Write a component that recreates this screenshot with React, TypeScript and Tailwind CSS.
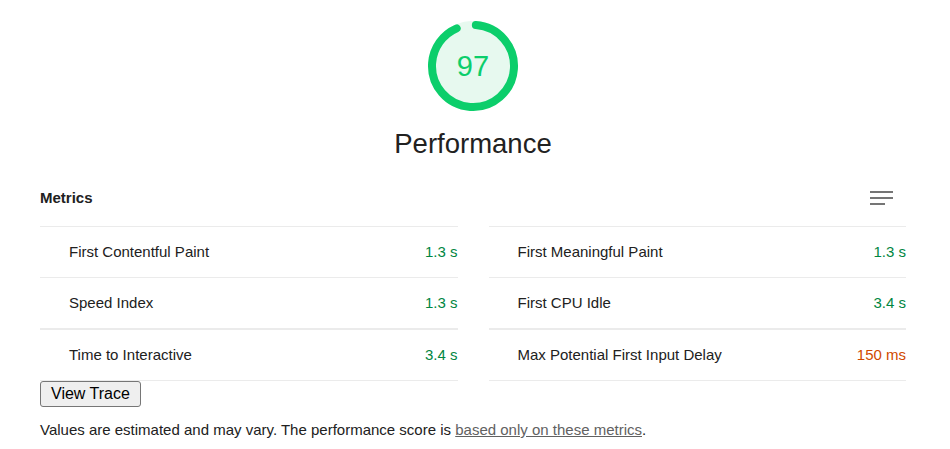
import React from "react";

// ---------------------------------------------------------------------------
// Data
// ---------------------------------------------------------------------------

type Metric = { label: string; value: string; tone: "pass" | "average" };

const LEFT: Metric[] = [
  { label: "First Contentful Paint", value: "1.3 s", tone: "pass" },
  { label: "Speed Index", value: "1.3 s", tone: "pass" },
  { label: "Time to Interactive", value: "3.4 s", tone: "pass" },
];

const RIGHT: Metric[] = [
  { label: "First Meaningful Paint", value: "1.3 s", tone: "pass" },
  { label: "First CPU Idle", value: "3.4 s", tone: "pass" },
  { label: "Max Potential First Input Delay", value: "150 ms", tone: "average" },
];

const R = 41;
const CIRC = 2 * Math.PI * R;
const ARC = (CIRC * 332) / 360;

// ---------------------------------------------------------------------------
// Pieces
// ---------------------------------------------------------------------------

function Gauge() {
  return (
    <div className="relative w-[96px] h-[96px]">
      <svg width="96" height="96" viewBox="0 0 96 96" className="block">
        <circle cx="48" cy="48" r="45" fill="#e7f9ef" />
        <circle
          cx="48"
          cy="48"
          r={R}
          fill="none"
          stroke="#0cce6b"
          strokeWidth="8"
          strokeLinecap="round"
          strokeDasharray={`${ARC} ${CIRC}`}
          transform="rotate(-86 48 48)"
        />
      </svg>
      <div className="absolute inset-0 flex items-center justify-center text-[29px] leading-none text-[#0cce6b]">
        97
      </div>
    </div>
  );
}

function MetricColumn({ items }: { items: Metric[] }) {
  return (
    <div className="flex flex-col">
      {items.map((m, i) => (
        <div
          key={m.label}
          className={`flex items-center justify-between h-[50px] box-content pl-[29px] border-b border-[#ebebeb] ${
            i === 0 || i === 2 ? "border-t" : ""
          }`}
        >
          <span className="text-[15px] text-[#212121]">{m.label}</span>
          <span
            className={`text-[15px] ${
              m.tone === "pass" ? "text-[#018642]" : "text-[#d04900]"
            }`}
          >
            {m.value}
          </span>
        </div>
      ))}
    </div>
  );
}

// ---------------------------------------------------------------------------
// App
// ---------------------------------------------------------------------------

export default function App() {
  return (
    <div
      className="w-[950px] h-[449px] bg-white pl-[40px] pr-[44px] pt-[18px] text-[#212121] overflow-hidden"
      style={{ fontFamily: '"Liberation Sans", Arial, sans-serif' }}
    >
      {/* Score gauge + title */}
      <div className="flex flex-col items-center">
        <Gauge />
        <div className="mt-[14px] text-[27.5px] leading-[32px] text-[#212121]">
          Performance
        </div>
      </div>

      {/* Metrics header */}
      <div className="mt-[29px] flex items-center justify-between h-[17px] mb-[20px]">
        <span className="text-[15px] leading-[17px] font-bold">Metrics</span>
        <svg width="23" height="14" viewBox="0 0 23 14" className="mr-[13px]">
          <rect x="0" y="0" width="23" height="2" fill="#757575" />
          <rect x="0" y="6" width="23" height="2" fill="#757575" />
          <rect x="0" y="12" width="15" height="2" fill="#757575" />
        </svg>
      </div>

      {/* Metrics grid */}
      <div className="grid grid-cols-2 gap-x-[31px]">
        <MetricColumn items={LEFT} />
        <MetricColumn items={RIGHT} />
      </div>

      <button
        type="button"
        className="h-[26px] px-[10px] bg-[#efefef] border border-[#767676] rounded-[3px] text-[16px] leading-none text-black"
      >
        View Trace
      </button>

      <p className="mt-[13px] text-[15px] leading-[20px] text-[#212121]">
        Values are estimated and may vary. The performance score is{" "}
        <a className="underline text-[#616161]">based only on these metrics</a>.
      </p>
    </div>
  );
}
